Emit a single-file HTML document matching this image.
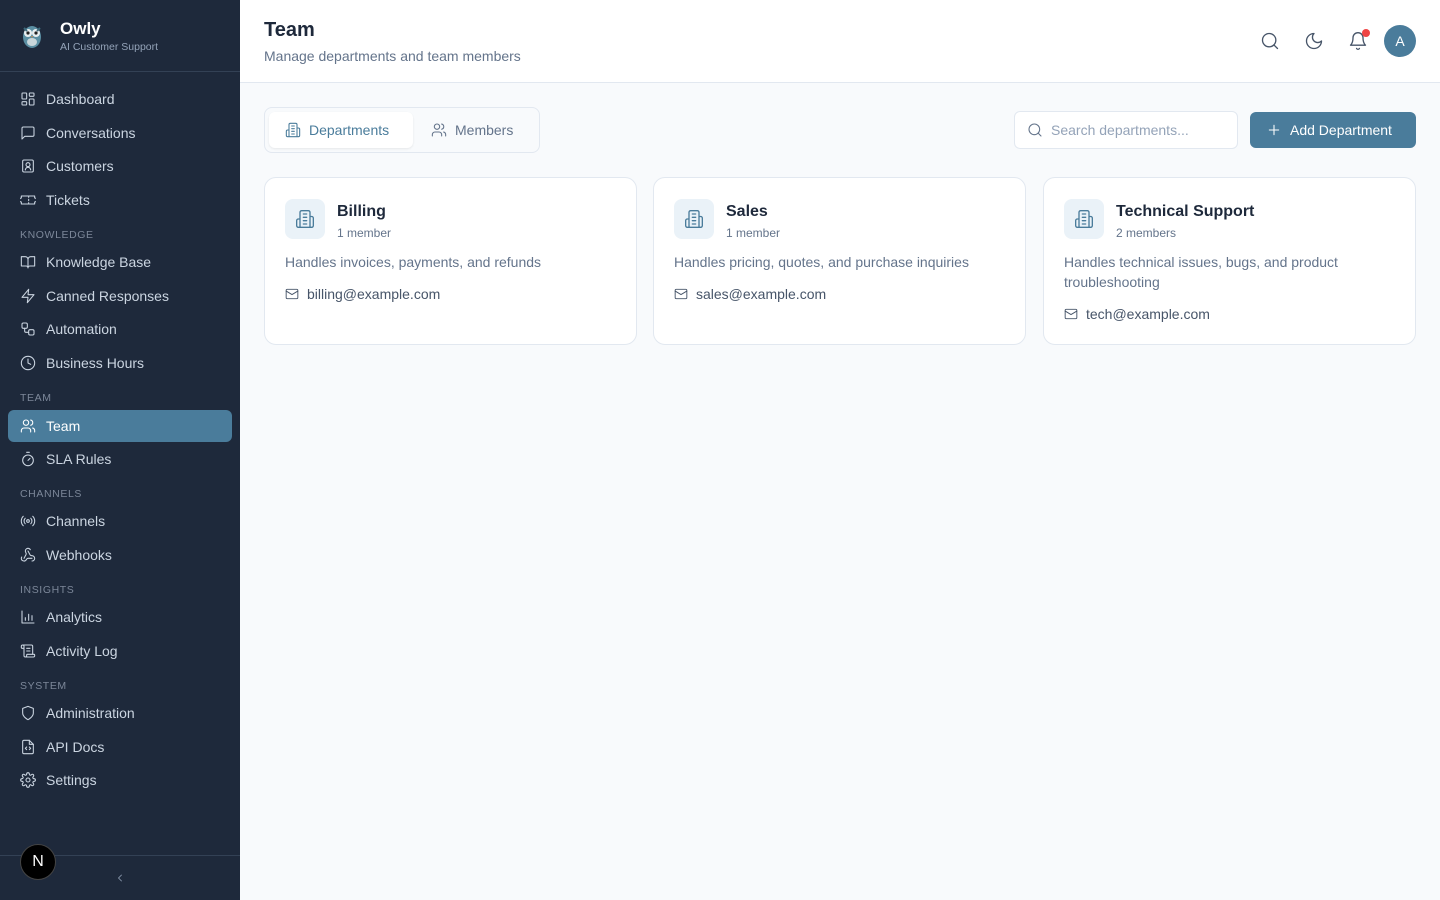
<!DOCTYPE html>
<html><head><meta charset="utf-8"><style>
*{box-sizing:border-box;margin:0;padding:0}
body{width:1440px;height:900px;font-family:"Liberation Sans",sans-serif;background:#f8fafc;position:relative;overflow:hidden;color:#1e293b}
.sb{position:absolute;left:0;top:0;width:240px;height:900px;background:#1e293b}
.it{position:absolute;left:8px;width:224px;height:32px;display:flex;align-items:center;padding-left:12px;color:#cbd5e1;font-size:14px}
.it svg{width:16px;height:16px;margin-right:10px;fill:none;stroke:#cbd5e1;stroke-width:1.6;stroke-linecap:round;stroke-linejoin:round}
.it.act{background:#4a7c9b;border-radius:6px;color:#fff}
.it.act svg{stroke:#fff}
.lb{position:absolute;left:20px;font-size:10.5px;letter-spacing:.6px;color:#7c8799}
.ic{fill:none;stroke:currentColor;stroke-width:1.6;stroke-linecap:round;stroke-linejoin:round}
.card{position:absolute;top:177px;width:373px;height:168px;background:#fff;border:1px solid #e2e8f0;border-radius:12px}
.bx{position:absolute;left:20px;top:21px;width:40px;height:40px;border-radius:8px;background:#eaf2f8;display:flex;align-items:center;justify-content:center;color:#4a7c9b}
.t{position:absolute;left:72px;top:25px;font-size:16px;font-weight:bold;color:#1e293b}
.m{position:absolute;left:72px;top:48px;font-size:12px;color:#64748b}
.d{position:absolute;left:20px;top:74px;right:40px;font-size:14px;line-height:20px;color:#64748b}
.e{position:absolute;left:20px;font-size:14px;color:#475569;display:flex;align-items:center}
.e svg{margin-right:8px}
</style></head><body>
<div class="sb">
 <div style="position:absolute;left:19px;top:20px;width:26px;height:30px">
  <svg width="26" height="30" viewBox="0 0 26 30"><ellipse cx="13" cy="17" rx="9" ry="11" fill="#5b8fa3"/><circle cx="9" cy="13" r="4" fill="#e8eef0"/><circle cx="17" cy="13" r="4" fill="#e8eef0"/><circle cx="9" cy="13" r="1.6" fill="#222"/><circle cx="17" cy="13" r="1.6" fill="#222"/><path d="M12 16l1 2 1-2z" fill="#d08a4a"/><ellipse cx="13" cy="22" rx="5" ry="4" fill="#c9d6da"/><path d="M5 8l3 3M21 8l-3 3" stroke="#3d6b7d" stroke-width="2"/></svg>
 </div>
 <div style="position:absolute;left:60px;top:19px;color:#fff;font-weight:bold;font-size:17px">Owly</div>
 <div style="position:absolute;left:60px;top:41px;color:#94a3b8;font-size:10.5px">AI Customer Support</div>
 <div style="position:absolute;left:0;top:71px;width:240px;height:1px;background:#334155"></div>

 <div class="it" style="top:83px"><svg viewBox="0 0 24 24"><rect x="3" y="3" width="7" height="9" rx="1"/><rect x="14" y="3" width="7" height="5" rx="1"/><rect x="14" y="12" width="7" height="9" rx="1"/><rect x="3" y="16" width="7" height="5" rx="1"/></svg>Dashboard</div>
 <div class="it" style="top:117px"><svg viewBox="0 0 24 24"><path d="M21 15a2 2 0 0 1-2 2H7l-4 4V5a2 2 0 0 1 2-2h14a2 2 0 0 1 2 2z"/></svg>Conversations</div>
 <div class="it" style="top:150px"><svg viewBox="0 0 24 24"><rect x="4" y="3" width="16" height="18" rx="2"/><circle cx="12" cy="10" r="3"/><path d="M8 18a4 4 0 0 1 8 0"/></svg>Customers</div>
 <div class="it" style="top:184px"><svg viewBox="0 0 24 24"><path d="M2 9a3 3 0 0 0 0 6v3h20v-3a3 3 0 0 0 0-6V6H2z"/><path d="M13 6v2M13 16v2M13 11v2"/></svg>Tickets</div>
 <div class="lb" style="top:229px">KNOWLEDGE</div>
 <div class="it" style="top:246px"><svg viewBox="0 0 24 24"><path d="M2 4h6a4 4 0 0 1 4 4v13a3 3 0 0 0-3-3H2zM22 4h-6a4 4 0 0 0-4 4v13a3 3 0 0 1 3-3h7z"/></svg>Knowledge Base</div>
 <div class="it" style="top:280px"><svg viewBox="0 0 24 24"><path d="M13 2L3 14h9l-1 8 10-12h-9z"/></svg>Canned Responses</div>
 <div class="it" style="top:313px"><svg viewBox="0 0 24 24"><rect x="3" y="3" width="8" height="8" rx="2"/><path d="M7 11v4a2 2 0 0 0 2 2h4"/><rect x="13" y="13" width="8" height="8" rx="2"/></svg>Automation</div>
 <div class="it" style="top:347px"><svg viewBox="0 0 24 24"><circle cx="12" cy="12" r="10"/><path d="M12 6v6l4 2"/></svg>Business Hours</div>
 <div class="lb" style="top:392px">TEAM</div>
 <div class="it act" style="top:410px"><svg viewBox="0 0 24 24"><path d="M16 21v-2a4 4 0 0 0-4-4H6a4 4 0 0 0-4 4v2"/><circle cx="9" cy="7" r="4"/><path d="M22 21v-2a4 4 0 0 0-3-3.9M16 3.1a4 4 0 0 1 0 7.8"/></svg>Team</div>
 <div class="it" style="top:443px"><svg viewBox="0 0 24 24"><path d="M10 2h4M12 14l3-3"/><circle cx="12" cy="14" r="8"/></svg>SLA Rules</div>
 <div class="lb" style="top:488px">CHANNELS</div>
 <div class="it" style="top:505px"><svg viewBox="0 0 24 24"><circle cx="12" cy="12" r="2"/><path d="M16.2 7.8a6 6 0 0 1 0 8.4M7.8 16.2a6 6 0 0 1 0-8.4M19.1 4.9a10 10 0 0 1 0 14.2M4.9 19.1a10 10 0 0 1 0-14.2"/></svg>Channels</div>
 <div class="it" style="top:539px"><svg viewBox="0 0 24 24"><path d="M18 16.98h-5.99c-1.1 0-1.95.94-2.48 1.9A4 4 0 0 1 2 17c.01-.7.2-1.4.57-2M6 17l3.13-5.78c.53-.97.1-2.18-.5-3.1a4 4 0 1 1 6.89-4.06M12 6l3.13 5.73C15.66 12.7 16.9 13 18 13a4 4 0 0 1 0 8"/></svg>Webhooks</div>
 <div class="lb" style="top:584px">INSIGHTS</div>
 <div class="it" style="top:601px"><svg viewBox="0 0 24 24"><path d="M3 3v18h18M8 17v-4M13 17V8M18 17v-7"/></svg>Analytics</div>
 <div class="it" style="top:635px"><svg viewBox="0 0 24 24"><path d="M15 12h-5M15 8h-5M19 17V5a2 2 0 0 0-2-2H4M8 21h12a2 2 0 0 0 2-2v-1a1 1 0 0 0-1-1H11a1 1 0 0 0-1 1v1a2 2 0 1 1-4 0V5a2 2 0 1 0-4 0v2a1 1 0 0 0 1 1h3"/></svg>Activity Log</div>
 <div class="lb" style="top:680px">SYSTEM</div>
 <div class="it" style="top:697px"><svg viewBox="0 0 24 24"><path d="M12 22s8-4 8-10V5l-8-3-8 3v7c0 6 8 10 8 10z"/></svg>Administration</div>
 <div class="it" style="top:731px"><svg viewBox="0 0 24 24"><path d="M14 2H6a2 2 0 0 0-2 2v16a2 2 0 0 0 2 2h12a2 2 0 0 0 2-2V8z"/><path d="M14 2v6h6M10 12l-2 2 2 2M14 12l2 2-2 2"/></svg>API Docs</div>
 <div class="it" style="top:764px"><svg viewBox="0 0 24 24"><circle cx="12" cy="12" r="3"/><path d="M19.4 15a1.7 1.7 0 0 0 .3 1.8l.1.1a2 2 0 1 1-2.8 2.8l-.1-.1a1.7 1.7 0 0 0-2.9 1.2V21a2 2 0 1 1-4 0v-.1a1.7 1.7 0 0 0-2.9-1.2l-.1.1a2 2 0 1 1-2.8-2.8l.1-.1A1.7 1.7 0 0 0 3 14H3a2 2 0 1 1 0-4h.1a1.7 1.7 0 0 0 1.2-2.9l-.1-.1a2 2 0 1 1 2.8-2.8l.1.1A1.7 1.7 0 0 0 10 3V3a2 2 0 1 1 4 0v.1a1.7 1.7 0 0 0 2.9 1.2l.1-.1a2 2 0 1 1 2.8 2.8l-.1.1A1.7 1.7 0 0 0 21 10h.1a2 2 0 1 1 0 4z"/></svg>Settings</div>

 <div style="position:absolute;left:0;top:855px;width:240px;height:1px;background:#334155"></div>
 <div style="position:absolute;left:20px;top:844px;width:36px;height:36px;border-radius:50%;background:#000;border:1px solid #444;color:#fff;font-size:16px;display:flex;align-items:center;justify-content:center">N</div>
 <svg style="position:absolute;left:114px;top:872px" width="12" height="12" viewBox="0 0 24 24" class="ic"><path d="M15 18l-6-6 6-6" stroke="#94a3b8"/></svg>
</div>

<div style="position:absolute;left:240px;top:0;width:1200px;height:83px;background:#fff;border-bottom:1px solid #e2e8f0">
 <div style="position:absolute;left:24px;top:19px;font-size:20px;font-weight:bold;color:#1e293b">Team</div>
 <div style="position:absolute;left:24px;top:48px;font-size:14px;color:#64748b">Manage departments and team members</div>
 <svg style="position:absolute;left:1020px;top:31px;color:#475569" width="20" height="20" viewBox="0 0 24 24" class="ic"><circle cx="11" cy="11" r="8"/><path d="M21 21l-4.3-4.3"/></svg>
 <svg style="position:absolute;left:1064px;top:31px;color:#475569" width="20" height="20" viewBox="0 0 24 24" class="ic"><path d="M12 3a6 6 0 0 0 9 9 9 9 0 1 1-9-9z"/></svg>
 <svg style="position:absolute;left:1108px;top:31px;color:#475569" width="20" height="20" viewBox="0 0 24 24" class="ic"><path d="M6 8a6 6 0 0 1 12 0c0 7 3 9 3 9H3s3-2 3-9M10.3 21a1.9 1.9 0 0 0 3.4 0"/></svg>
 <div style="position:absolute;left:1122px;top:29px;width:8px;height:8px;border-radius:50%;background:#ef4444"></div>
 <div style="position:absolute;left:1144px;top:25px;width:32px;height:32px;border-radius:50%;background:#4a7c9b;color:#fff;font-size:14px;display:flex;align-items:center;justify-content:center">A</div>
</div>

<div style="position:absolute;left:264px;top:107px;width:276px;height:46px;border:1px solid #e2e8f0;border-radius:8px;background:#f8fafc">
 <div style="position:absolute;left:4px;top:4px;width:144px;height:36px;background:#fff;border-radius:6px;box-shadow:0 1px 2px rgba(0,0,0,.08);display:flex;align-items:center;padding-left:16px;color:#4a7c9b;font-size:14px">
  <svg width="16" height="16" viewBox="0 0 24 24" class="ic" style="margin-right:8px"><path d="M6 22V4a2 2 0 0 1 2-2h8a2 2 0 0 1 2 2v18zM6 12H4a2 2 0 0 0-2 2v6a2 2 0 0 0 2 2h2M18 9h2a2 2 0 0 1 2 2v9a2 2 0 0 1-2 2h-2M10 6h4M10 10h4M10 14h4M10 18h4"/></svg>Departments</div>
 <div style="position:absolute;left:166px;top:4px;height:36px;display:flex;align-items:center;color:#64748b;font-size:14px">
  <svg width="16" height="16" viewBox="0 0 24 24" class="ic" style="margin-right:8px"><path d="M16 21v-2a4 4 0 0 0-4-4H6a4 4 0 0 0-4 4v2"/><circle cx="9" cy="7" r="4"/><path d="M22 21v-2a4 4 0 0 0-3-3.9M16 3.1a4 4 0 0 1 0 7.8"/></svg>Members</div>
</div>

<div style="position:absolute;left:1014px;top:111px;width:224px;height:38px;border:1px solid #e2e8f0;border-radius:6px;background:#fff;display:flex;align-items:center;padding-left:12px;color:#94a3b8;font-size:14px">
 <svg width="16" height="16" viewBox="0 0 24 24" class="ic" style="margin-right:8px;color:#64748b"><circle cx="11" cy="11" r="8"/><path d="M21 21l-4.3-4.3"/></svg>Search departments...</div>
<div style="position:absolute;left:1250px;top:112px;width:166px;height:36px;border-radius:6px;background:#4a7c9b;color:#fff;font-size:14px;display:flex;align-items:center;padding-left:16px">
 <svg width="16" height="16" viewBox="0 0 24 24" class="ic" style="margin-right:8px"><path d="M12 5v14M5 12h14"/></svg>Add Department</div>

<div class="card" style="left:264px">
 <div class="bx"><svg width="20" height="20" viewBox="0 0 24 24" class="ic"><path d="M6 22V4a2 2 0 0 1 2-2h8a2 2 0 0 1 2 2v18zM6 12H4a2 2 0 0 0-2 2v6a2 2 0 0 0 2 2h2M18 9h2a2 2 0 0 1 2 2v9a2 2 0 0 1-2 2h-2M10 6h4M10 10h4M10 14h4M10 18h4"/></svg></div>
 <div class="t">Billing</div><div class="m">1 member</div>
 <div class="d">Handles invoices, payments, and refunds</div>
 <div class="e" style="top:108px"><svg width="14" height="14" viewBox="0 0 24 24" class="ic"><rect x="2" y="4" width="20" height="16" rx="2"/><path d="M22 7l-10 6L2 7"/></svg>billing@example.com</div>
</div>
<div class="card" style="left:653px">
 <div class="bx"><svg width="20" height="20" viewBox="0 0 24 24" class="ic"><path d="M6 22V4a2 2 0 0 1 2-2h8a2 2 0 0 1 2 2v18zM6 12H4a2 2 0 0 0-2 2v6a2 2 0 0 0 2 2h2M18 9h2a2 2 0 0 1 2 2v9a2 2 0 0 1-2 2h-2M10 6h4M10 10h4M10 14h4M10 18h4"/></svg></div>
 <div class="t">Sales</div><div class="m">1 member</div>
 <div class="d">Handles pricing, quotes, and purchase inquiries</div>
 <div class="e" style="top:108px"><svg width="14" height="14" viewBox="0 0 24 24" class="ic"><rect x="2" y="4" width="20" height="16" rx="2"/><path d="M22 7l-10 6L2 7"/></svg>sales@example.com</div>
</div>
<div class="card" style="left:1043px">
 <div class="bx"><svg width="20" height="20" viewBox="0 0 24 24" class="ic"><path d="M6 22V4a2 2 0 0 1 2-2h8a2 2 0 0 1 2 2v18zM6 12H4a2 2 0 0 0-2 2v6a2 2 0 0 0 2 2h2M18 9h2a2 2 0 0 1 2 2v9a2 2 0 0 1-2 2h-2M10 6h4M10 10h4M10 14h4M10 18h4"/></svg></div>
 <div class="t">Technical Support</div><div class="m">2 members</div>
 <div class="d">Handles technical issues, bugs, and product troubleshooting</div>
 <div class="e" style="top:128px"><svg width="14" height="14" viewBox="0 0 24 24" class="ic"><rect x="2" y="4" width="20" height="16" rx="2"/><path d="M22 7l-10 6L2 7"/></svg>tech@example.com</div>
</div>
</body></html>
